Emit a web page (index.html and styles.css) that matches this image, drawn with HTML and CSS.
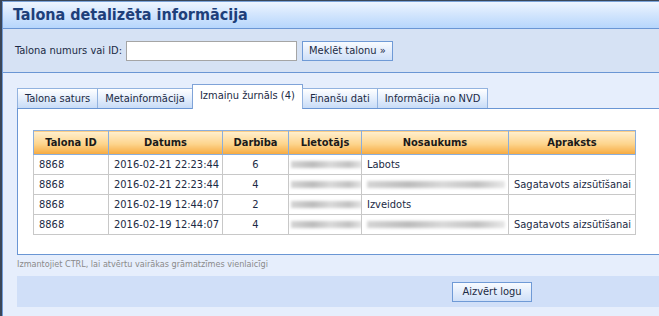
FILE: index.html
```html
<!DOCTYPE html>
<html lang="lv">
<head>
    <meta charset="UTF-8">
    <title>Talona detalizēta informācija</title>
    <link rel="stylesheet" href="styles.css">
</head>
<body>
    <div class="dialog">
        <div class="title-bar">Talona detalizēta informācija</div>

        <form class="search-row">
            <label for="talons">Talona numurs vai ID:</label>
            <input type="text" id="talons" name="talons">
            <button type="button" class="btn">Meklēt talonu &raquo;</button>
        </form>

        <div class="content">
            <ul class="tabs">
                <li class="tab">Talona saturs</li>
                <li class="tab">Metainformācija</li>
                <li class="tab active">Izmaiņu žurnāls (4)</li>
                <li class="tab">Finanšu dati</li>
                <li class="tab">Informācija no NVD</li>
            </ul>

            <div class="panel">
                <table class="log">
                    <thead>
                        <tr>
                            <th class="c-id">Talona ID</th>
                            <th class="c-date">Datums</th>
                            <th class="c-act">Darbība</th>
                            <th class="c-user">Lietotājs</th>
                            <th class="c-name">Nosaukums</th>
                            <th class="c-desc">Apraksts</th>
                        </tr>
                    </thead>
                    <tbody>
                        <tr>
                            <td>8868</td>
                            <td>2016-02-21 22:23:44</td>
                            <td class="num">6</td>
                            <td><span class="blur blur-user"></span></td>
                            <td>Labots</td>
                            <td></td>
                        </tr>
                        <tr>
                            <td>8868</td>
                            <td>2016-02-21 22:23:44</td>
                            <td class="num">4</td>
                            <td><span class="blur blur-user"></span></td>
                            <td><span class="blur blur-name"></span></td>
                            <td>Sagatavots aizsūtīšanai</td>
                        </tr>
                        <tr>
                            <td>8868</td>
                            <td>2016-02-19 12:44:07</td>
                            <td class="num">2</td>
                            <td><span class="blur blur-user"></span></td>
                            <td>Izveidots</td>
                            <td></td>
                        </tr>
                        <tr>
                            <td>8868</td>
                            <td>2016-02-19 12:44:07</td>
                            <td class="num">4</td>
                            <td><span class="blur blur-user"></span></td>
                            <td><span class="blur blur-name"></span></td>
                            <td>Sagatavots aizsūtīšanai</td>
                        </tr>
                    </tbody>
                </table>
            </div>

            <p class="hint">Izmantojiet CTRL, lai atvērtu vairākas grāmatzīmes vienlaicīgi</p>

            <div class="footer">
                <button type="button" class="btn btn-close">Aizvērt logu</button>
            </div>
        </div>
    </div>
</body>
</html>
```

FILE: styles.css
```css
html, body {
    margin: 0;
    height: 100%;
    overflow: hidden;
}
body {
    background-color: #3a4658;
    font-family: "DejaVu Sans Condensed", "DejaVu Sans", Verdana, sans-serif;
    font-stretch: condensed;
    font-size: 11px;
    color: #1b2a44;
}
.dialog {
    margin: 1px 0 0 2px;
    height: 100%;
    background-color: #e6eefc;
    border-left: 1px solid #6f9ad6;
    border-top: 1px solid #7aa2d8;
}
.title-bar {
    height: 26px;
    line-height: 25px;
    padding-left: 10px;
    font-size: 16px;
    font-weight: bold;
    color: #1e3f7a;
    background: linear-gradient(#eef5ff, #d4e6fd 45%, #b6d6fc);
    border-bottom: 1px solid #6a96d4;
}
.search-row {
    display: flex;
    align-items: center;
    height: 43px;
    margin: 0;
    padding-left: 12px;
    background-color: #d6e2f4;
    border-bottom: 1px solid #6a96d4;
}
.search-row label {
    margin-right: 4px;
}
.search-row input {
    width: 167px;
    height: 16px;
    padding: 1px;
    margin: 0 5px 0 0;
    border: 1px solid #a5a5a5;
    background-color: white;
}
.btn {
    height: 20px;
    padding: 0 6px;
    font-family: inherit;
    font-stretch: inherit;
    font-size: 11px;
    color: #1b2a44;
    border: 1px solid #6f9ad6;
    background: linear-gradient(#f8fbff, #dfeafb 60%, #cfe0f8);
}
.content {
    padding: 11px 0 0 14px;
}
.tabs {
    display: flex;
    align-items: flex-end;
    list-style: none;
    margin: 0;
    padding: 0;
    position: relative;
    z-index: 1;
}
.tab {
    height: 19px;
    line-height: 19px;
    padding: 0 7px;
    margin-right: -1px;
    border: 1px solid #93b3df;
    border-bottom: none;
    background: linear-gradient(#ffffff, #e4eefc 50%, #c8dcf7);
    color: #1b2a44;
}
.tab.active {
    height: 24px;
    line-height: 22px;
    background: white;
    border-color: #7fa3d8;
    margin-bottom: -1px;
}
.panel {
    height: 124px;
    padding: 21px 0 0 15px;
    background-color: white;
    border: 1px solid #6a96d4;
    border-right: none;
}
.log {
    width: 603px;
    table-layout: fixed;
    border-collapse: collapse;
}
.log th {
    height: 23px;
    padding: 0;
    font-weight: bold;
    color: #1a1a1a;
    background: linear-gradient(#fff0cf, #fdd48c 55%, #f6a93e);
    border: 1px solid #8aaedc;
}
.log td {
    height: 19px;
    padding: 0 0 0 5px;
    border: 1px solid #c8c8c8;
    white-space: nowrap;
    overflow: hidden;
}
.log td.num {
    text-align: center;
    padding: 0;
}
.c-id { width: 74px; }
.c-date { width: 113px; }
.c-act { width: 65px; }
.c-user { width: 72px; }
.c-name { width: 146px; }
.blur {
    display: block;
    height: 7px;
    margin-left: -3px;
    background: linear-gradient(90deg, #d5d5d5, #bcbcbc 30%, #d9d9d9 55%, #c2c2c2 80%, #e8e8e8);
    filter: blur(1.5px);
}
.blur-user {
    width: 72px;
}
.blur-name {
    width: 138px;
    margin-left: 0;
}
.hint {
    margin: 4px 0 0 0;
    font-size: 9px;
    color: #8a8a8a;
}
.footer {
    display: flex;
    align-items: center;
    height: 31px;
    margin-top: 7px;
    padding-left: 435px;
    background-color: #d0dff8;
}
.btn-close {
    width: 80px;
    padding: 0;
}
```
